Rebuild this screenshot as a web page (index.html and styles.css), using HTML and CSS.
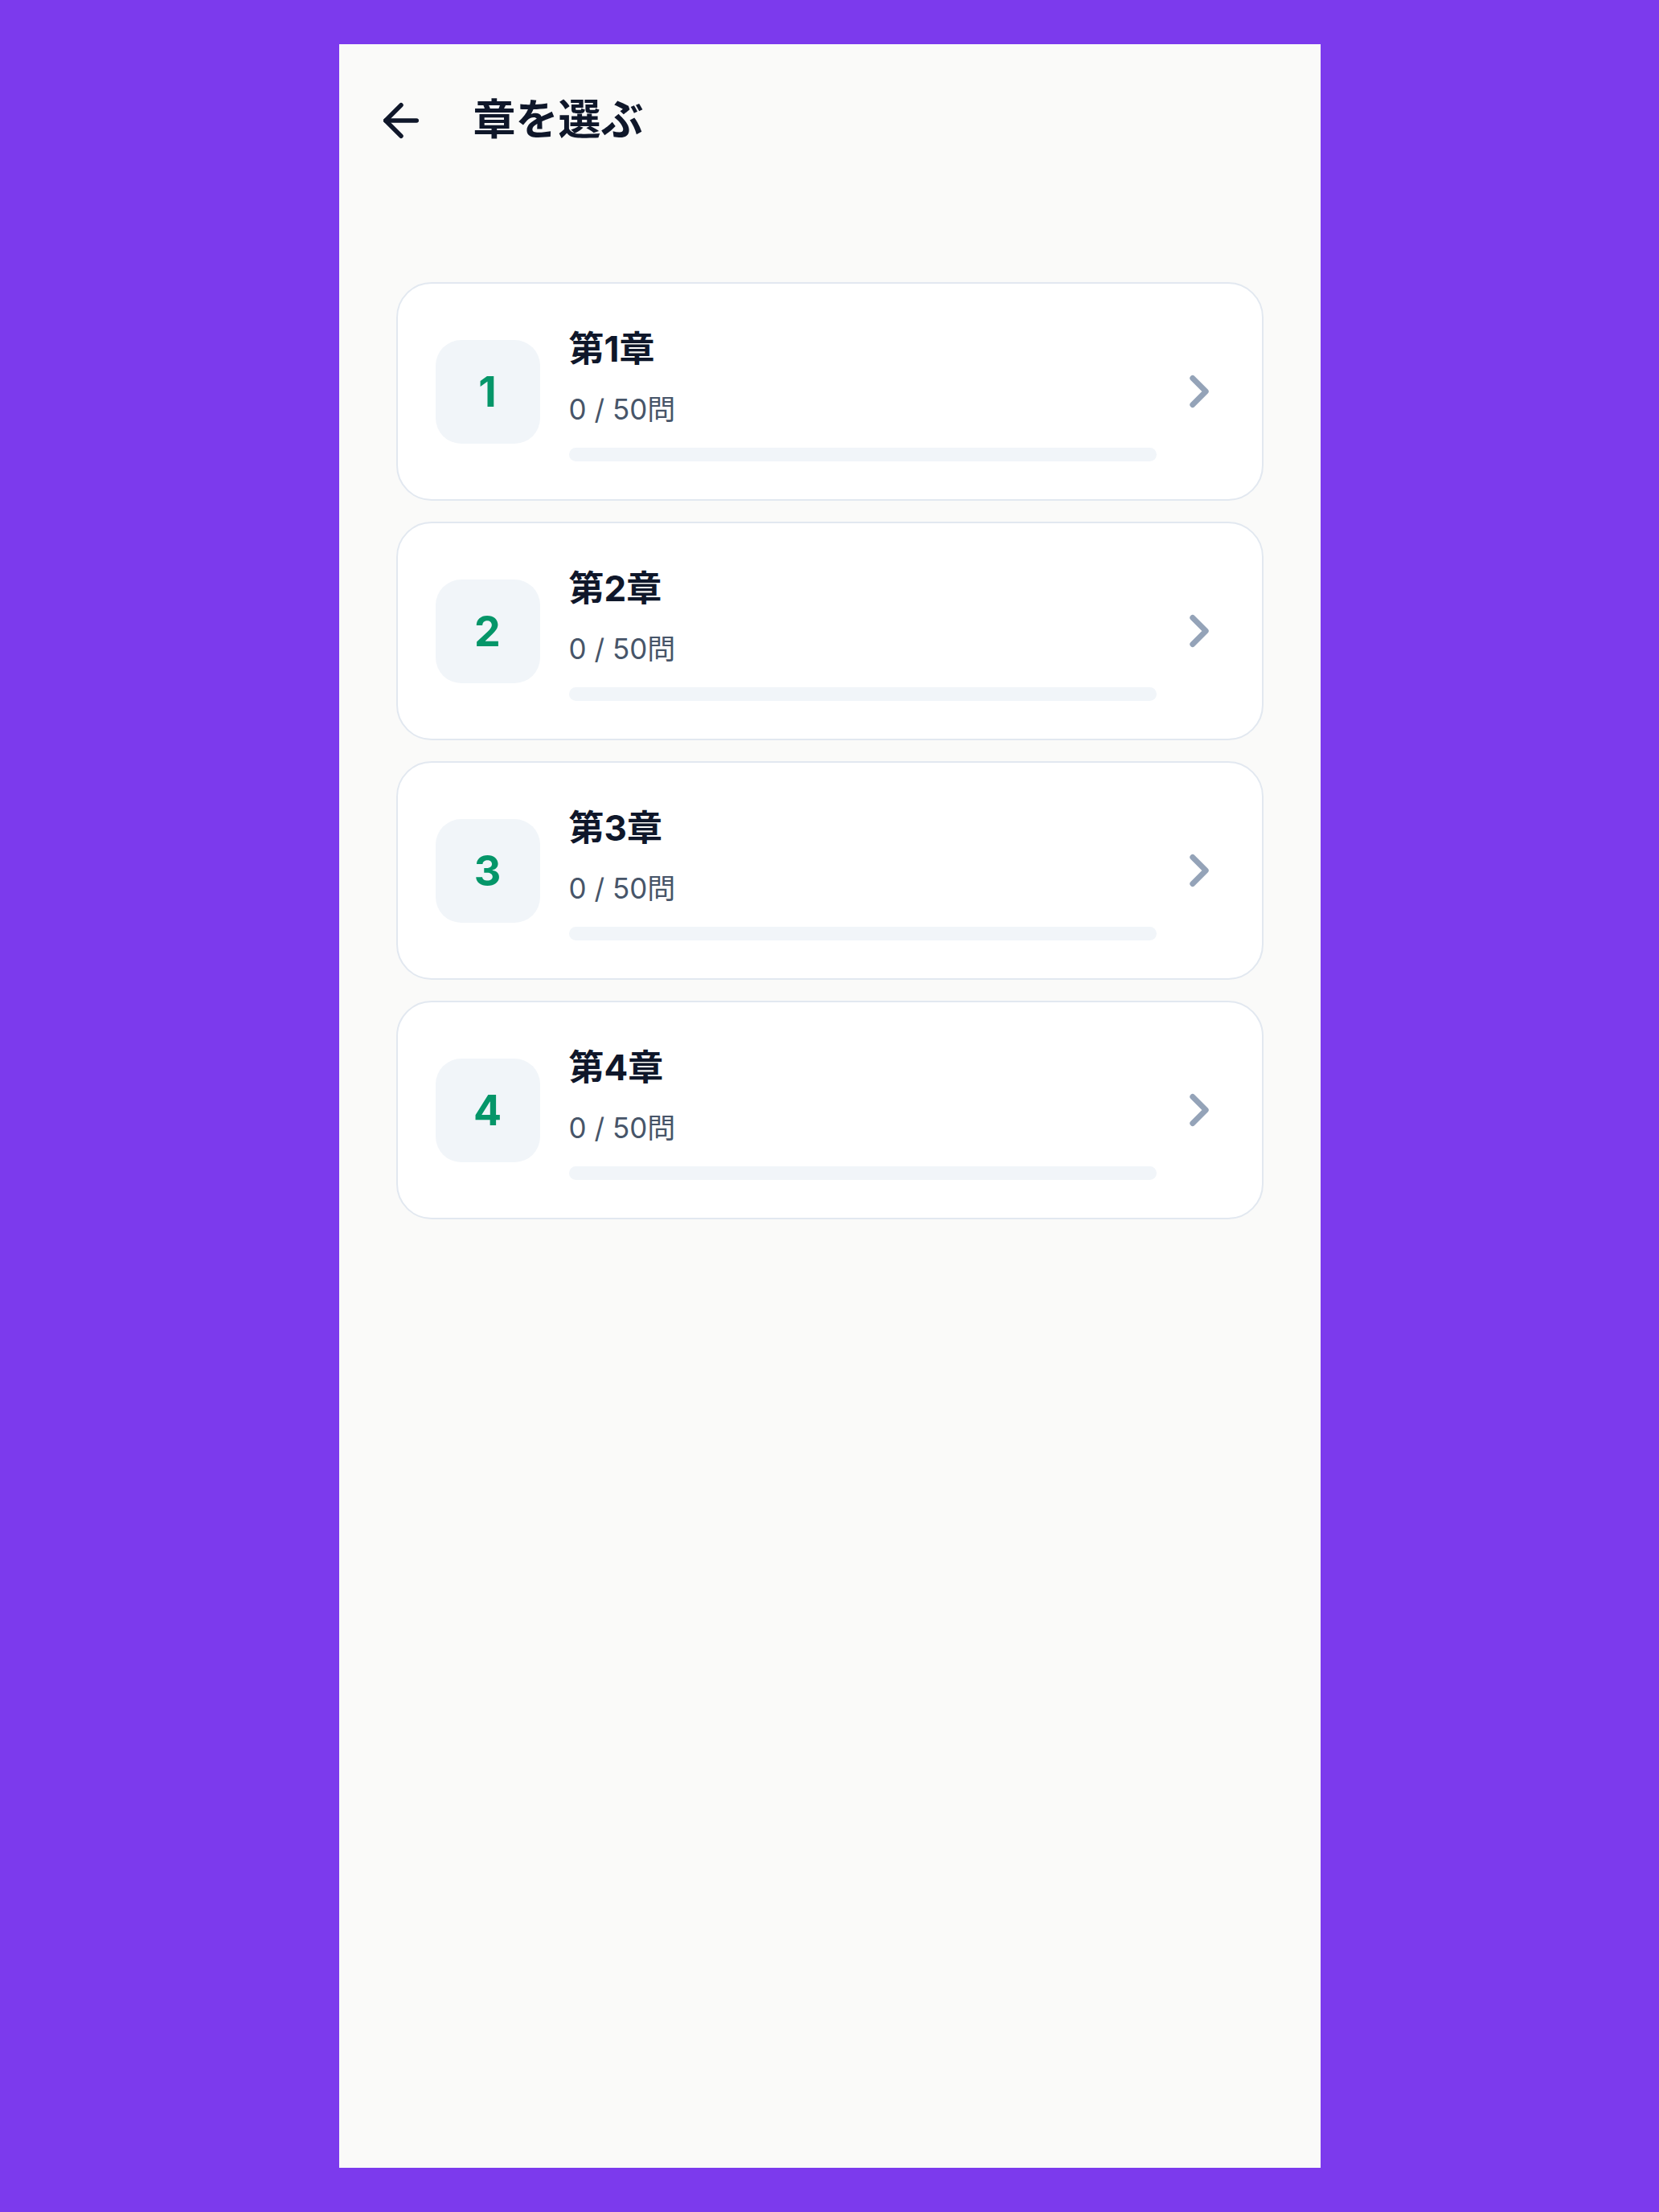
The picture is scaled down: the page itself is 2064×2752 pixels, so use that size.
FILE: index.html
```html
<!DOCTYPE html>
<html lang="ja">
<head>
<meta charset="utf-8">
<title>章を選ぶ</title>
<link rel="stylesheet" href="styles.css">
</head>
<body>
<div class="screen">
  <header class="topbar">
    <button class="back" aria-label="戻る">
      <svg viewBox="0 0 24 24" width="66" height="66" fill="none" stroke="currentColor" stroke-width="2" stroke-linecap="round" stroke-linejoin="round"><path d="m12 19-7-7 7-7"/><path d="M19 12H5"/></svg>
    </button>
    <h1 class="title">章を選ぶ</h1>
  </header>
  <main class="list">
    <a class="card" href="#">
      <div class="num">1</div>
      <div class="info">
        <div class="name">第1章</div>
        <div class="count">0 / 50問</div>
        <div class="bar"><div class="fill" style="width:0%"></div></div>
      </div>
      <svg class="chev" viewBox="0 0 24 24" width="66" height="66" fill="none" stroke="currentColor" stroke-width="2.5" stroke-linecap="round" stroke-linejoin="round"><path d="m9 18 6-6-6-6"/></svg>
    </a>
    <a class="card" href="#">
      <div class="num">2</div>
      <div class="info">
        <div class="name">第2章</div>
        <div class="count">0 / 50問</div>
        <div class="bar"><div class="fill" style="width:0%"></div></div>
      </div>
      <svg class="chev" viewBox="0 0 24 24" width="66" height="66" fill="none" stroke="currentColor" stroke-width="2.5" stroke-linecap="round" stroke-linejoin="round"><path d="m9 18 6-6-6-6"/></svg>
    </a>
    <a class="card" href="#">
      <div class="num">3</div>
      <div class="info">
        <div class="name">第3章</div>
        <div class="count">0 / 50問</div>
        <div class="bar"><div class="fill" style="width:0%"></div></div>
      </div>
      <svg class="chev" viewBox="0 0 24 24" width="66" height="66" fill="none" stroke="currentColor" stroke-width="2.5" stroke-linecap="round" stroke-linejoin="round"><path d="m9 18 6-6-6-6"/></svg>
    </a>
    <a class="card" href="#">
      <div class="num">4</div>
      <div class="info">
        <div class="name">第4章</div>
        <div class="count">0 / 50問</div>
        <div class="bar"><div class="fill" style="width:0%"></div></div>
      </div>
      <svg class="chev" viewBox="0 0 24 24" width="66" height="66" fill="none" stroke="currentColor" stroke-width="2.5" stroke-linecap="round" stroke-linejoin="round"><path d="m9 18 6-6-6-6"/></svg>
    </a>
  </main>
</div>
</body>
</html>
```
FILE: styles.css
```css
* { box-sizing: border-box; }
html, body { margin: 0; padding: 0; }
body {
  background: #7c3aed;
  font-family: Inter, "Noto Sans CJK JP", sans-serif;
  color: #0f172a;
  min-height: 2752px;
}
.screen {
  width: 1221px;
  height: 2642px;
  margin: 55px auto 0;
  background: #fafaf9;
}
.topbar {
  display: flex;
  align-items: flex-start;
  height: 128px;
  padding: 62px 44px 0;
  gap: 57px;
}
.back {
  display: flex;
  width: 66px;
  height: 66px;
  padding: 0;
  border: 0;
  background: none;
  color: #0f172a;
}
.title {
  margin: -5px 0 0;
  font-size: 53px;
  font-weight: 700;
  line-height: 66px;
  color: #0f172a;
  font-family: "Noto Sans CJK JP", sans-serif;
}
.list {
  display: flex;
  flex-direction: column;
  gap: 26px;
  padding: 168px 71px 0;
}
.card {
  display: flex;
  align-items: center;
  height: 272px;
  padding: 0 45px 0 47px;
  background: #ffffff;
  border: 2px solid #e2e8f0;
  border-radius: 44px;
  text-decoration: none;
  color: inherit;
}
.num {
  flex: none;
  width: 130px;
  height: 129px;
  border-radius: 32px;
  background: #f1f5f9;
  color: #059669;
  font-weight: 700;
  font-size: 52px;
  display: flex;
  align-items: center;
  justify-content: center;
}
.info {
  flex: 1;
  margin: 0 20px 0 36px;
  display: flex;
  flex-direction: column;
}
.name {
  font-size: 44px;
  font-weight: 700;
  line-height: 63px;
  color: #0f172a;
  padding-top: 3px;
}
.count {
  font-size: 35px;
  line-height: 52px;
  margin-top: 17px;
  color: #475569;
}
.bar {
  height: 17px;
  margin-top: 22px;
  border-radius: 9px;
  background: #f1f5f9;
  overflow: hidden;
}
.fill {
  height: 100%;
  background: #059669;
}
.chev {
  flex: none;
  color: #94a3b8;
}
```
